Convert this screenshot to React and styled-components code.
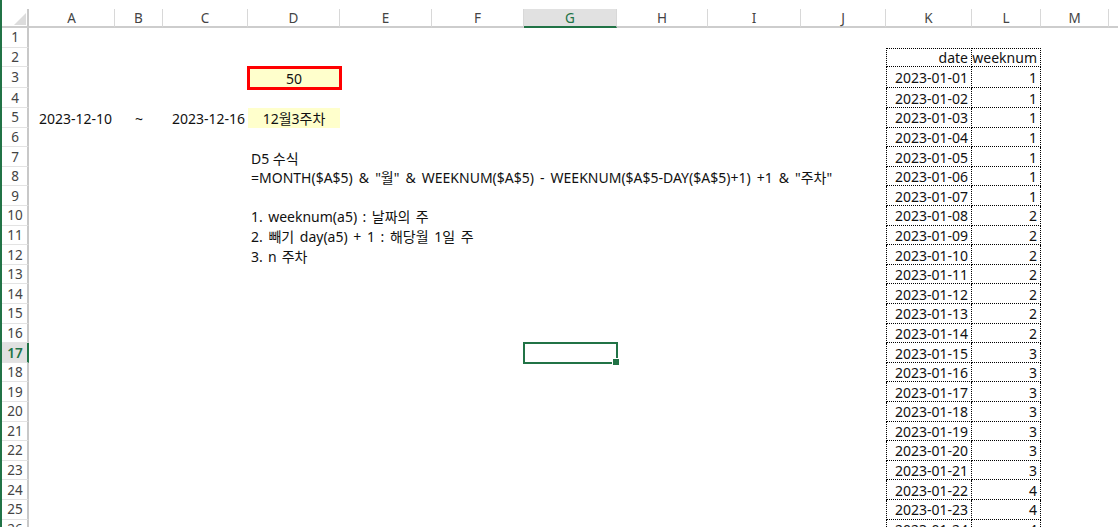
import styled, { createGlobalStyle, css } from 'styled-components';

const GlobalStyle = createGlobalStyle`
  html, body {
    margin: 0;
    padding: 0;
    background: #ffffff;
  }
  body {
    font-family: "Noto Sans", "Noto Sans CJK KR", sans-serif;
  }
`;

const COLUMNS = [
  { key: 'A', width: 86 },
  { key: 'B', width: 48 },
  { key: 'C', width: 85 },
  { key: 'D', width: 92 },
  { key: 'E', width: 92 },
  { key: 'F', width: 92 },
  { key: 'G', width: 93 },
  { key: 'H', width: 91 },
  { key: 'I', width: 93 },
  { key: 'J', width: 85 },
  { key: 'K', width: 86 },
  { key: 'L', width: 69 },
  { key: 'M', width: 68 },
];

const ROW_COUNT = 26;
const ACTIVE = { col: 'G', row: 17 };

const GREEN = '#217346';

// cell content keyed by row, then column
const cells = {
  2: { K: { text: 'date', align: 'right' }, L: { text: 'weeknum', align: 'right' } },
  3: { D: { text: '50', align: 'center', fill: true, frame: true } },
  5: {
    A: { text: '2023-12-10', align: 'right' },
    B: { text: '~', align: 'center' },
    C: { text: '2023-12-16', align: 'right' },
    D: { text: '12월3주차', align: 'center', fill: true },
  },
  7: { D: { text: 'D5 수식' } },
  8: { D: { text: '=MONTH($A$5) & "월" & WEEKNUM($A$5) - WEEKNUM($A$5-DAY($A$5)+1) +1 & "주차"', wide: 2.4 } },
  10: { D: { text: '1. weeknum(a5) : 날짜의 주', wide: 1.8 } },
  11: { D: { text: '2. 빼기 day(a5) + 1 : 해당월 1일 주', wide: 2 } },
  12: { D: { text: '3. n 주차', wide: 1.5 } },
};

// the K:L date table, starting at row 3 with 2023-01-01
for (let r = 3; r <= ROW_COUNT; r++) {
  const day = r - 2;
  const week = Math.floor((day - 1) / 7) + 1;
  cells[r] = {
    ...(cells[r] || {}),
    K: { text: `2023-01-${String(day).padStart(2, '0')}`, align: 'right' },
    L: { text: String(week), align: 'right' },
  };
}

const Window = styled.div`
  height: 527px;
  overflow: hidden;
  border-left: 2px solid ${GREEN};
  padding-top: 9px;
  box-sizing: border-box;
  background: #ffffff;
`;

const Sheet = styled.div`
  display: grid;
  grid-template-columns: 27px ${COLUMNS.map((c) => `${c.width}px`).join(' ')} 1fr;
  grid-template-rows: 19px 19.6px 19.6px 21.3px repeat(${ROW_COUNT - 3}, 19.6px);
`;

const Corner = styled.div`
  box-sizing: border-box;
  border-right: 2px solid #c8c8c8;
  border-bottom: 2px solid #cdcdcd;
  display: flex;
  align-items: flex-end;
  justify-content: flex-end;
  padding: 0 1px 1px 0;

  svg {
    display: block;
  }
`;

const ColHeader = styled.div`
  box-sizing: border-box;
  display: flex;
  align-items: center;
  justify-content: center;
  font-size: 13.5px;
  color: #444444;
  border-right: 1px solid #d8d8d8;
  border-bottom: 2px solid #cdcdcd;
  padding-top: 1px;

  ${(p) =>
    p.$active &&
    css`
      background: #e1e1e1;
      color: ${GREEN};
      border-bottom-color: ${GREEN};
    `}
`;

const Filler = styled.div`
  border-bottom: 2px solid #cdcdcd;
  box-sizing: border-box;
`;

const RowHeader = styled.div`
  box-sizing: border-box;
  display: flex;
  align-items: center;
  justify-content: center;
  font-size: 13.5px;
  color: #444444;
  border-right: 2px solid #c8c8c8;
  border-bottom: 1px solid #e3e3e3;
  padding-left: 1px;

  ${(p) =>
    p.$active &&
    css`
      background: #e1e1e1;
      color: ${GREEN};
      font-weight: 600;
      border-right-color: ${GREEN};
    `}
`;

const Cell = styled.div`
  position: relative;
  box-sizing: border-box;
  display: flex;
  align-items: center;
  padding: 1px 3px 0;
  font-size: 14px;
  color: #111111;
  white-space: nowrap;
  overflow: visible;
  justify-content: ${(p) =>
    p.$align === 'right' ? 'flex-end' : p.$align === 'center' ? 'center' : 'flex-start'};
  background: ${(p) => (p.$fill ? '#ffffcc' : 'transparent')};
  word-spacing: ${(p) => p.$wide || 0}px;

  ${(p) =>
    p.$table &&
    css`
      border-right: 1px dotted #000000;
      border-bottom: 1px dotted #000000;
    `}
  ${(p) => p.$tableLeft && 'border-left: 1px dotted #000000;'}
  ${(p) => p.$tableTop && 'border-top: 1px dotted #000000;'}
`;

const Text = styled.span`
  position: relative;
  z-index: 2;
`;

const RedFrame = styled.div`
  position: absolute;
  top: -1px;
  left: -1px;
  right: -2px;
  bottom: -2px;
  border: 3px solid #ff0000;
  box-sizing: border-box;
`;

const Selection = styled.div`
  position: absolute;
  top: -1px;
  left: -1px;
  right: -1px;
  bottom: -1px;
  border: 2px solid ${GREEN};
  box-sizing: border-box;
`;

const FillHandle = styled.div`
  position: absolute;
  right: -4px;
  bottom: -4px;
  width: 6px;
  height: 6px;
  background: ${GREEN};
  border: 1px solid #ffffff;
`;

export default function App() {
  const rows = Array.from({ length: ROW_COUNT }, (_, i) => i + 1);

  return (
    <>
      <GlobalStyle />
      <Window>
        <Sheet>
          <Corner>
            <svg width="12" height="12" viewBox="0 0 12 12">
              <polygon points="12,0 12,12 0,12" fill="#dcdcdc" />
            </svg>
          </Corner>
          {COLUMNS.map((c) => (
            <ColHeader key={c.key} $active={c.key === ACTIVE.col}>
              {c.key}
            </ColHeader>
          ))}
          <Filler />

          {rows.map((r) => (
            <Row key={r} row={r} />
          ))}
        </Sheet>
      </Window>
    </>
  );
}

function Row({ row }) {
  const data = cells[row] || {};
  return (
    <>
      <RowHeader $active={row === ACTIVE.row}>{row}</RowHeader>
      {COLUMNS.map((c) => {
        const cell = data[c.key];
        const inTable = row >= 2 && (c.key === 'K' || c.key === 'L');
        const selected = row === ACTIVE.row && c.key === ACTIVE.col;
        return (
          <Cell
            key={c.key}
            $align={cell?.align}
            $fill={cell?.fill}
            $wide={cell?.wide}
            $table={inTable}
            $tableLeft={inTable && c.key === 'K'}
            $tableTop={inTable && row === 2}
          >
            {cell?.frame && <RedFrame />}
            {cell && <Text>{cell.text}</Text>}
            {selected && (
              <Selection>
                <FillHandle />
              </Selection>
            )}
          </Cell>
        );
      })}
      <div />
    </>
  );
}
